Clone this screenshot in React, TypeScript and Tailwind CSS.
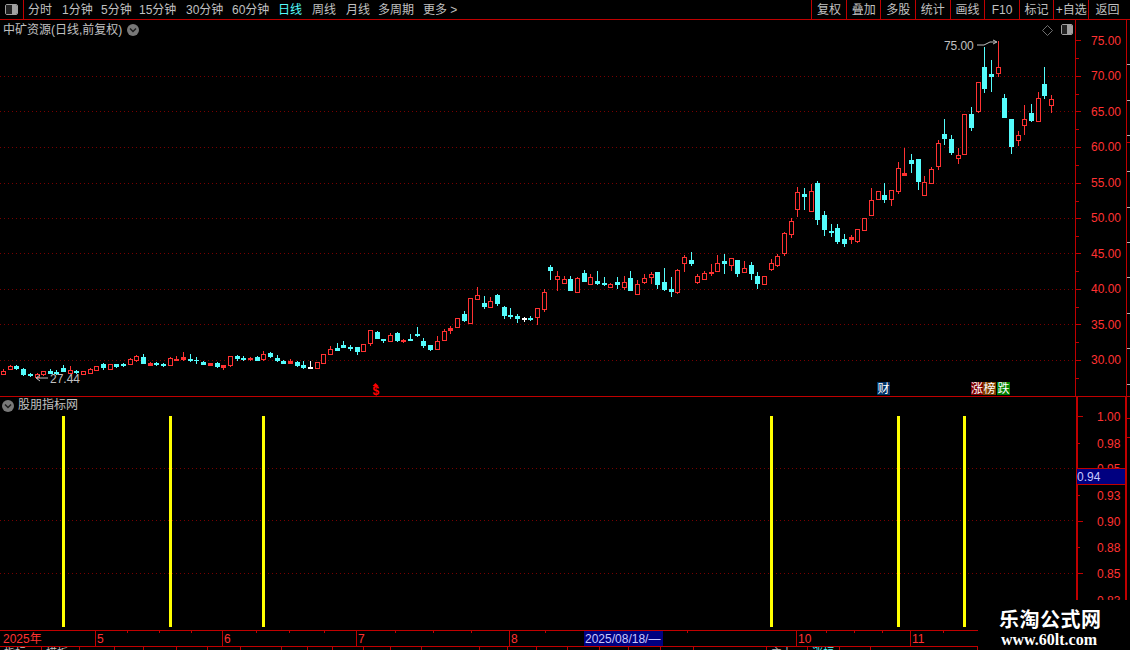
const RED = "#ff3232";
const CYAN = "#54fcfc";
const LINE = "#c00000";
const DOT = "#780000";

type Candle = [number, number, number, number, number, "r" | "c" | "w"];

// x, wick top, wick bottom, body top, body bottom, colour
const candles: Candle[] = [
  [3, 369, 374, 371, 374, "r"], [10, 365, 369, 366, 369, "r"], [16, 365, 369, 366, 368, "c"], [23, 368, 375, 369, 374, "c"],
  [30, 373, 376, 374, 375, "c"], [37, 373, 378, 374, 377, "r"], [43, 371, 375, 371, 374, "r"], [50, 369, 373, 371, 373, "c"],
  [56, 370, 374, 372, 373, "c"], [63, 365, 371, 368, 371, "c"], [70, 366, 373, 370, 373, "r"], [76, 370, 373, 371, 372, "c"],
  [83, 371, 374, 371, 374, "r"], [90, 368, 373, 369, 373, "r"], [96, 366, 370, 366, 370, "r"], [103, 363, 369, 364, 367, "c"],
  [110, 364, 369, 364, 369, "r"], [116, 364, 367, 364, 366, "c"], [123, 363, 366, 364, 365, "c"], [130, 358, 364, 359, 364, "r"],
  [136, 355, 361, 356, 360, "r"], [143, 354, 363, 357, 363, "c"], [150, 362, 365, 363, 365, "r"], [156, 362, 365, 363, 364, "c"],
  [163, 363, 366, 364, 365, "c"], [170, 357, 365, 358, 365, "r"], [176, 356, 360, 359, 360, "r"], [183, 352, 360, 357, 359, "r"],
  [190, 354, 361, 359, 360, "c"], [196, 357, 363, 360, 360, "c"], [203, 361, 364, 362, 364, "c"], [210, 363, 365, 363, 365, "r"],
  [217, 362, 367, 363, 366, "c"], [223, 365, 369, 365, 367, "r"], [230, 356, 366, 356, 365, "r"], [237, 355, 360, 356, 358, "c"],
  [243, 356, 360, 358, 359, "c"], [250, 357, 360, 358, 359, "r"], [257, 356, 360, 357, 360, "c"], [263, 351, 360, 354, 359, "r"],
  [270, 352, 357, 353, 356, "c"], [277, 355, 361, 358, 360, "c"],
  [283, 360, 363, 361, 363, "c"], [290, 359, 363, 361, 363, "r"], [297, 361, 366, 362, 365, "c"], [303, 361, 368, 365, 367, "c"],
  [310, 361, 368, 367, 368, "w"], [317, 362, 368, 362, 368, "r"], [323, 354, 363, 354, 363, "r"], [330, 346, 354, 349, 354, "r"],
  [337, 343, 350, 348, 350, "c"], [343, 341, 347, 345, 347, "c"], [350, 345, 350, 347, 348, "c"], [357, 347, 354, 347, 351, "c"],
  [363, 344, 351, 344, 351, "r"], [370, 330, 345, 330, 343, "r"], [377, 331, 338, 332, 338, "c"], [383, 339, 342, 339, 340, "c"],
  [390, 333, 341, 335, 341, "r"], [397, 332, 341, 333, 340, "c"], [403, 339, 342, 340, 341, "r"], [410, 334, 340, 339, 340, "c"],
  [417, 327, 336, 334, 335, "c"], [423, 338, 347, 341, 345, "c"], [430, 345, 350, 345, 349, "c"], [437, 336, 349, 341, 349, "r"],
  [444, 329, 340, 331, 340, "r"], [450, 326, 333, 328, 330, "r"],
  [457, 318, 327, 318, 327, "r"], [464, 311, 321, 314, 320, "c"], [470, 298, 323, 298, 323, "r"], [477, 287, 299, 295, 299, "r"],
  [484, 296, 308, 303, 306, "c"], [490, 297, 307, 301, 307, "r"], [497, 294, 305, 295, 303, "c"], [504, 306, 318, 307, 315, "c"],
  [510, 308, 318, 315, 316, "c"], [517, 314, 322, 316, 318, "c"], [524, 317, 321, 318, 319, "w"], [530, 316, 320, 318, 319, "c"],
  [537, 308, 324, 308, 317, "r"], [544, 289, 311, 292, 309, "r"],
  [550, 265, 279, 267, 270, "c"], [557, 271, 290, 276, 279, "r"], [564, 276, 283, 279, 283, "r"], [570, 276, 290, 279, 290, "c"],
  [577, 277, 292, 278, 292, "r"], [584, 270, 281, 273, 281, "c"], [590, 274, 284, 277, 284, "r"], [597, 271, 284, 281, 283, "c"],
  [604, 277, 285, 283, 284, "c"], [610, 283, 287, 284, 287, "r"], [617, 277, 288, 282, 284, "c"], [624, 276, 289, 282, 287, "r"],
  [630, 271, 290, 278, 290, "c"], [637, 280, 294, 284, 294, "r"], [644, 274, 283, 278, 282, "r"], [651, 272, 283, 274, 277, "r"],
  [657, 272, 288, 272, 284, "c"], [664, 268, 290, 282, 289, "c"], [671, 277, 296, 289, 291, "c"], [677, 269, 293, 270, 292, "r"],
  [684, 255, 271, 257, 263, "r"], [691, 252, 265, 260, 263, "c"], [697, 274, 283, 276, 282, "r"], [704, 271, 279, 273, 279, "r"],
  [711, 264, 275, 272, 273, "r"], [717, 255, 271, 263, 271, "r"], [724, 254, 273, 261, 263, "c"], [731, 258, 270, 258, 265, "r"],
  [737, 260, 276, 260, 273, "c"], [744, 261, 272, 268, 272, "r"], [751, 262, 279, 265, 273, "c"], [757, 272, 288, 276, 283, "c"],
  [764, 276, 284, 276, 284, "r"],
  [771, 259, 270, 263, 269, "r"], [777, 254, 266, 256, 265, "r"], [784, 232, 255, 233, 253, "r"], [791, 218, 237, 221, 234, "r"],
  [797, 187, 216, 192, 209, "r"], [804, 188, 209, 194, 196, "c"], [811, 184, 211, 191, 211, "r"], [817, 181, 224, 183, 219, "c"],
  [824, 211, 235, 215, 229, "c"], [831, 224, 236, 231, 232, "c"], [837, 224, 243, 228, 241, "c"], [844, 234, 246, 239, 243, "c"],
  [851, 235, 243, 237, 239, "r"], [857, 229, 242, 229, 241, "r"], [864, 218, 230, 218, 230, "r"], [871, 188, 215, 200, 215, "r"],
  [878, 191, 199, 191, 199, "r"], [884, 183, 202, 195, 199, "c"], [891, 190, 205, 190, 199, "r"],
  [898, 162, 193, 168, 191, "r"], [904, 148, 175, 173, 175, "r"], [911, 154, 172, 160, 163, "c"], [918, 159, 189, 159, 181, "c"],
  [924, 176, 195, 182, 195, "r"], [931, 167, 183, 169, 183, "r"], [938, 140, 169, 143, 166, "r"], [944, 119, 144, 134, 138, "c"],
  [951, 135, 154, 139, 152, "c"], [958, 148, 163, 155, 158, "r"], [964, 114, 154, 114, 154, "r"], [971, 107, 130, 114, 127, "c"],
  [978, 82, 112, 82, 111, "r"], [984, 47, 92, 67, 88, "c"], [991, 60, 91, 74, 76, "c"], [998, 41, 76, 67, 73, "r"],
  [1004, 94, 117, 98, 117, "c"], [1011, 119, 153, 119, 146, "c"], [1018, 131, 145, 135, 140, "r"], [1024, 105, 134, 119, 125, "r"],
  [1031, 104, 121, 113, 120, "c"], [1038, 92, 121, 98, 121, "r"], [1044, 67, 98, 84, 95, "c"], [1051, 95, 112, 99, 105, "r"],
];

// tick y, label, text baseline
const priceAxis: [number, string, number][] = [
  [40, "75.00", 45], [76, "70.00", 80], [111, "65.00", 116], [147, "60.00", 151], [183, "55.00", 187],
  [218, "50.00", 222], [253, "45.00", 258], [289, "40.00", 293], [324, "35.00", 329], [360, "30.00", 364],
];

const lowerAxis: [number, string, number][] = [
  [416, "1.00", 5], [443, "0.98", 2], [468, "0.95", 2], [495, "0.93", 2],
  [521, "0.90", 5], [547, "0.88", 2], [573, "0.85", 5], [600, "0.83", 2],
];

const signalBars = [62, 169, 262, 770, 897, 963];
const timeTicks = [127, 159, 191, 256, 289, 324, 395, 433, 471, 545, 687, 826, 854, 882, 943];
const footerCells = [42, 38, 35, 29, 33, 31, 33, 41, 26, 25, 31, 27, 31, 58, 28, 29, 31, 32, 29, 32, 33, 73, 41, 32, 31, 107];
const footerLabels: Record<number, string> = { 0: "指标", 1: "模板", 22: "主力", 23: "涨幅" };

// label, advance to the next item
const periods: [string, number][] = [
  ["分时", 34], ["1分钟", 39], ["5分钟", 38], ["15分钟", 47], ["30分钟", 46], ["60分钟", 46],
  ["日线", 34], ["周线", 34], ["月线", 32], ["多周期", 45], ["更多 >", 36],
];

function CandleMark({ c }: { c: Candle }) {
  const [x, wickTop, wickBottom, top, bottom, kind] = c;
  const colour = kind === "r" ? RED : kind === "c" ? CYAN : "#ffffff";
  const height = bottom - top;
  const hollow = kind === "r" && height > 2;
  return (
    <g>
      <rect x={x} y={wickTop} width={1} height={wickBottom - wickTop + 1} fill={colour} />
      {hollow ? (
        <rect x={x - 1.5} y={top + 0.5} width={4} height={height} fill="#000000" stroke={colour} />
      ) : (
        <rect x={x - 2} y={top} width={5} height={height + 1} fill={colour} />
      )}
    </g>
  );
}

function Chevron() {
  return (
    <svg width="12" height="12" viewBox="0 0 12 12">
      <circle cx="6" cy="6" r="6" fill="#787878" />
      <path d="M3 4.5 6 7.5 9 4.5" fill="none" stroke="#1c1c1c" strokeWidth="1.5" />
    </svg>
  );
}

function PanelIcon({ className }: { className: string }) {
  return (
    <div className={`flex overflow-hidden rounded-[2px] border border-[#a0a0a0] ${className}`}>
      <div className="flex-1 bg-[#222222]" />
      <div className="flex-1 bg-[#a0a0a0]" />
    </div>
  );
}

function TopBar() {
  const right = ["复权", "叠加", "多股", "统计", "画线", "F10", "标记", "+自选"];
  return (
    <div className="flex h-[20px] items-center border-b border-[#c00000] text-[12px] leading-none text-[#c0c0c0]">
      <div className="flex h-full w-[24px] items-center justify-center border-r border-[#c00000]">
        <PanelIcon className="h-[11px] w-[13px]" />
      </div>
      <div className="ml-[4px] flex">
        {periods.map(([t, w]) => (
          <span key={t} className={`whitespace-nowrap ${t === "日线" ? "text-[#54fcfc]" : ""}`} style={{ width: w }}>
            {t}
          </span>
        ))}
      </div>
      <div className="ml-auto flex h-full">
        {right.map((t) => (
          <span key={t} className="flex w-[34.6px] items-center justify-center whitespace-nowrap border-l border-[#c00000]">
            {t}
          </span>
        ))}
        <span className="flex w-[42px] items-center justify-center border-l border-[#c00000] pr-[4px]">返回</span>
      </div>
    </div>
  );
}

function PriceChart() {
  return (
    <div className="relative flex h-[377px] border-b border-[#c00000]">
      <svg width="1075" height="376" viewBox="0 20 1075 376" shapeRendering="crispEdges">
        {priceAxis.slice(1).map(([y]) => (
          <line key={y} x1="0" x2="1075" y1={y + 0.5} y2={y + 0.5} stroke={DOT} strokeDasharray="1 3" />
        ))}
        {candles.map((c) => (
          <CandleMark key={c[0]} c={c} />
        ))}
        <g shapeRendering="auto" fill="#c0c0c0" fontSize="12">
          <text x="944" y="50" letterSpacing="-0.1">75.00</text>
          <path d="M977 45h7l6-3h6m-3-2 4 2-4 2" fill="none" stroke="#c0c0c0" />
          <text x="50" y="383">27.44</text>
          <path d="M48 378H37m3-3-4 3 4 3" fill="none" stroke="#c0c0c0" />
          <path d="M375.500 383l3 3h-6z" fill="#ff0000" />
          <text x="372.500" y="395" fontSize="12" fontWeight="700" fill="#ff0000">$</text>
        </g>
        <g shapeRendering="auto" fontSize="12" fill="#ffffff" textAnchor="middle">
          <rect x="877" y="382" width="13" height="13" fill="#003366" shapeRendering="crispEdges" />
          <text x="883.500" y="393">财</text>
          <rect x="971" y="382" width="12" height="13" fill="#800000" shapeRendering="crispEdges" />
          <text x="977" y="393">涨</text>
          <rect x="983" y="382" width="13" height="13" fill="#804000" shapeRendering="crispEdges" />
          <text x="989.500" y="393">榜</text>
          <rect x="997" y="382" width="13" height="13" fill="#008000" shapeRendering="crispEdges" />
          <text x="1003.500" y="393">跌</text>
        </g>
      </svg>
      <svg width="55" height="376" viewBox="1075 20 55 376" shapeRendering="crispEdges">
        <line x1="1075.500" x2="1075.500" y1="20" y2="396" stroke={LINE} />
        <line x1="1126.500" x2="1126.500" y1="20" y2="396" stroke={LINE} />
        {priceAxis.map(([y, label, base]) => (
          <g key={y}>
            <line x1="1076" x2="1081" y1={y + 0.5} y2={y + 0.5} stroke={LINE} />
            <line x1="1076" x2="1079" y1={y + 18.5} y2={y + 18.5} stroke={LINE} />
            <line x1="1127" x2="1130" y1={y + 24.5} y2={y + 24.5} stroke="#b0b0b0" />
            <text x="1091" y={base} fontSize="12" fill={RED} shapeRendering="auto">{label}</text>
          </g>
        ))}
        <line x1="1127" x2="1130" y1="142.500" y2="142.500" stroke={LINE} />
      </svg>
      <div className="absolute left-[3px] top-[2px] flex items-center gap-[5px] text-[12px] leading-[16px] text-[#c0c0c0]">
        <span>中矿资源(日线,前复权)</span>
        <Chevron />
      </div>
      <svg className="absolute left-[1042px] top-[5px]" width="11" height="11" viewBox="0 0 11 11">
        <path d="M5.500 .5l5 5-5 5-5-5z" fill="none" stroke="#707070" />
      </svg>
      <PanelIcon className="absolute left-[1061px] top-[4px] h-[11px] w-[12px]" />
    </div>
  );
}

function SignalChart() {
  return (
    <div className="relative flex h-[233px]">
      <svg width="1075" height="233" viewBox="0 397 1075 233" shapeRendering="crispEdges">
        {[468, 520, 573].map((y) => (
          <line key={y} x1="0" x2="1075" y1={y + 0.5} y2={y + 0.5} stroke={DOT} strokeDasharray="1 3" />
        ))}
        {signalBars.map((x) => (
          <rect key={x} x={x} y="416" width="3" height="211" fill="#ffff00" />
        ))}
      </svg>
      <svg width="55" height="233" viewBox="1075 397 55 233" shapeRendering="crispEdges">
        <rect x="1076" y="397" width="2" height="233" fill={LINE} />
        <rect x="1125" y="397" width="2" height="233" fill={LINE} />
        {lowerAxis.map(([y, label, tick]) => (
          <g key={y}>
            <line x1="1078" x2={1078 + tick} y1={y + 0.5} y2={y + 0.5} stroke={LINE} />
            <text x="1097" y={y + 5} fontSize="12" fill={RED} shapeRendering="auto">{label}</text>
          </g>
        ))}
        <line x1="1127" x2="1130" y1="418.500" y2="418.500" stroke={LINE} />
        <line x1="1127" x2="1130" y1="437.500" y2="437.500" stroke={LINE} />
      </svg>
      <div className="absolute left-[2px] top-0 flex items-center gap-[4px] text-[12px] leading-[17px] text-[#c0c0c0]">
        <Chevron />
        <span>股朋指标网</span>
      </div>
      <div className="absolute left-[1077px] top-[71px] flex h-[17px] w-[48px] items-center border-y border-[#c00000] bg-[#000080] text-[12px] leading-none text-[#c8c8ff]">
        0.94
      </div>
    </div>
  );
}

function TimeAxis() {
  const cell = "flex h-full items-center border-l border-[#c00000] pl-[1px]";
  return (
    <div className="relative flex h-[16px] w-[978px] border-t border-[#c00000] text-[12px] leading-none text-[#ff3232]">
      <span className="flex h-full w-[95px] items-center pl-[3px]">2025年</span>
      <span className={`${cell} w-[127px]`}>5</span>
      <span className={`${cell} w-[134px]`}>6</span>
      <span className={`${cell} w-[153px]`}>7</span>
      <span className={`${cell} w-[75px]`}>8</span>
      <span className="flex h-full w-[79px] items-center bg-[#000080] pl-[1px] text-[#c8c8ff]">2025/08/18/—</span>
      <span className="h-full w-[133px]" />
      <span className={`${cell} w-[114px]`}>10</span>
      <span className={`${cell} flex-1`}>11</span>
      {timeTicks.map((x) => (
        <i key={x} className="absolute top-0 h-[2px] w-px bg-[#c00000]" style={{ left: x }} />
      ))}
    </div>
  );
}

function FooterTabs() {
  return (
    <div className="flex h-[4px] overflow-hidden border-t border-[#c00000] text-[11px] leading-[12px] text-[#c0c0c0]">
      {footerCells.map((w, i) => (
        <span
          key={i}
          className={`shrink-0 overflow-hidden whitespace-nowrap border-r border-[#c00000] pl-[4px] ${i === 23 ? "text-[#54fcfc]" : ""}`}
          style={{ width: w }}
        >
          {footerLabels[i] ?? ""}
        </span>
      ))}
    </div>
  );
}

export default function App() {
  return (
    <div className="relative h-[650px] w-[1130px] overflow-hidden bg-black [font-family:'Liberation_Sans','Noto_Sans_CJK_SC',sans-serif]">
      <TopBar />
      <PriceChart />
      <SignalChart />
      <TimeAxis />
      <FooterTabs />
      <div className="absolute bottom-0 right-0 flex h-[50px] w-[152px] flex-col items-start bg-black pl-[21px] pt-[7px] text-white">
        <span className="text-[20px] font-bold leading-[24px] tracking-[0.5px] [font-family:'Noto_Sans_CJK_SC',serif]">乐淘公式网</span>
        <span className="ml-[2px] mt-[2px] text-[16px] font-bold leading-[14px] [font-family:'Liberation_Serif',serif]">www.60lt.com</span>
      </div>
    </div>
  );
}
